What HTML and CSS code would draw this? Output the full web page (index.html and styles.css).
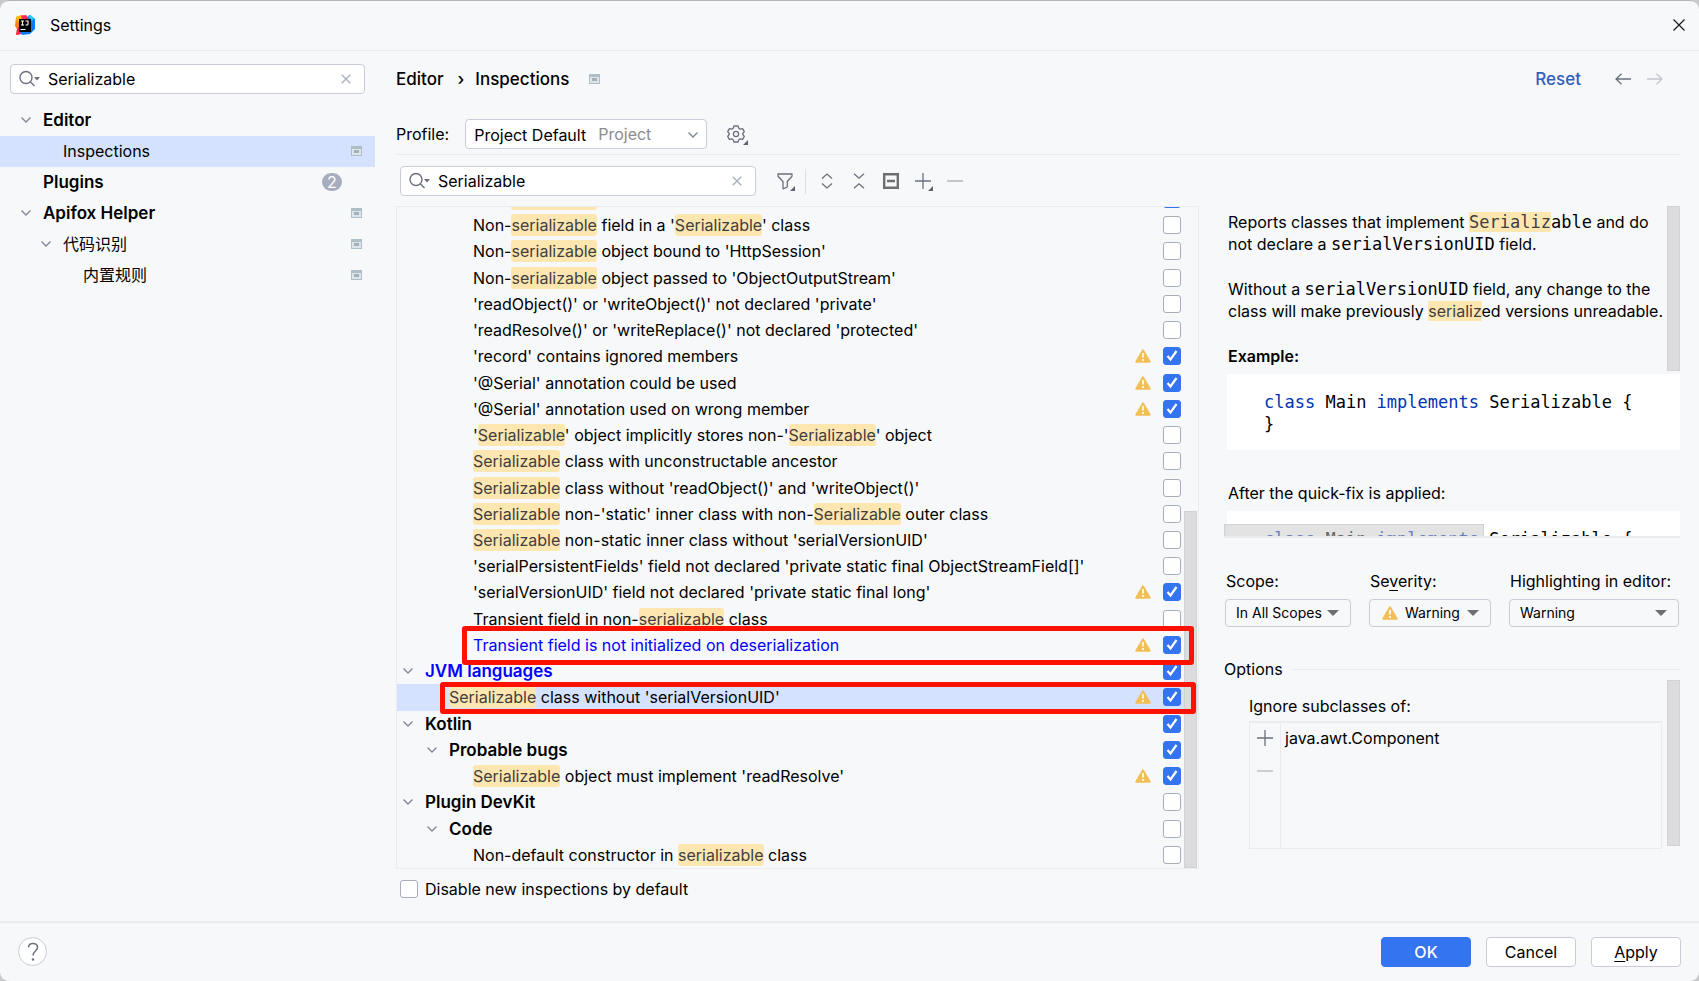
FILE: index.html
```html
<!DOCTYPE html>
<html lang="en">
<head>
<meta charset="utf-8">
<title>Settings</title>
<link rel="stylesheet" href="styles.css">
</head>
<body>
<svg class="sprite" aria-hidden="true">
  <symbol id="i-search" viewBox="0 0 22 18"><circle cx="7" cy="7.500" r="6" fill="none" stroke="#6c707e" stroke-width="1.4"/><path d="M11.500 12l4 4" stroke="#6c707e" stroke-width="1.4"/><path d="M15 7h6l-3 3.600z" fill="#6c707e"/></symbol>
  <symbol id="i-clear" viewBox="0 0 10 10"><path d="M.7.7l8.6 8.6M9.3.7L.7 9.3" stroke="#a8adbd" stroke-width="1.3"/></symbol>
  <symbol id="i-chevron" viewBox="0 0 12 8"><path d="M1.500 1.500L6 6l4.500-4.500" fill="none" stroke="#818594" stroke-width="1.3"/></symbol>
  <symbol id="i-project" viewBox="0 0 11 10"><path d="M0 0h11v10H0z" fill="#afbdc5"/><path d="M1 3h9v6H1z" fill="#dde5ea"/><path d="M3 4h5v3H3z" fill="#a3b1b9"/></symbol>
  <symbol id="i-warn" viewBox="0 0 16 14"><path d="M8 1.300L14.700 12.700H1.300z" fill="#f2bf57" stroke="#f2bf57" stroke-width="2" stroke-linejoin="round"/><path d="M8 4v4.500M8 10v2" stroke="#fff" stroke-width="1.700"/></symbol>
  <symbol id="i-plus" viewBox="0 0 16 16"><path d="M8 0v16M0 8h16" stroke="#6c707e" stroke-width="1.300"/></symbol>
  <symbol id="i-minus" viewBox="0 0 16 16"><path d="M0 8h16" stroke="#b4b6bd" stroke-width="1.300"/></symbol>
  <symbol id="i-corner" viewBox="0 0 5 5"><path d="M5 0v5H0z" fill="#5f6270"/></symbol>
</svg>
<div class="window">
  <header class="titlebar">
    <svg class="logo" width="20" height="20" viewBox="0 0 20 20" aria-hidden="true">
      <path d="M1 2L8 0l4 5-6 14-5 1 1-6-2-3z" fill="#fc801d"/>
      <path d="M5 1l6-1 4 4-9 15-5 1 1-6 2-3z" fill="#fe2857"/>
      <path d="M13 1l2-1 5 4v10l-5 5-8 1-2-3 8-4z" fill="#087cfa"/>
      <path d="M13 1l2-1 4 3-2 3z" fill="#21d0f5"/>
      <path d="M1 2l5-2 1 5-5 2z" fill="#fdb60d"/>
      <path d="M4 4h12v13H4z" fill="#000"/>
      <path d="M6 6h3M7.500 6v4M6 10h3M10.500 6h2.500v3q0 1-1 1h-1.500M5.500 14.500h5" fill="none" stroke="#fff" stroke-width="1.100"/>
    </svg>
    <h1 class="title">Settings</h1>
    <button class="plain close" aria-label="Close"><svg width="12" height="12" viewBox="0 0 12 12"><path d="M.5.5l11 11M11.500.5l-11 11" stroke="#1a1a1a" stroke-width="1.200"/></svg></button>
  </header>

  <div class="body">
    <nav class="sidebar">
      <div class="field side-search">
        <svg width="22" height="18"><use href="#i-search"/></svg>
        <input type="text" value="Serializable" aria-label="Search settings">
        <button class="plain" aria-label="Clear"><svg width="10" height="10"><use href="#i-clear"/></svg></button>
      </div>
      <ul class="nav">
        <li class="nav-row bold"><svg class="chev" width="12" height="8"><use href="#i-chevron"/></svg><a href="#">Editor</a></li>
        <li class="nav-row nav-2 selected"><a href="#">Inspections</a><svg width="11" height="10"><use href="#i-project"/></svg></li>
        <li class="nav-row nav-1 bold"><a href="#">Plugins</a><span class="count">2</span></li>
        <li class="nav-row bold"><svg class="chev" width="12" height="8"><use href="#i-chevron"/></svg><a href="#">Apifox Helper</a><svg width="11" height="10"><use href="#i-project"/></svg></li>
        <li class="nav-row nav-sub"><svg class="chev" width="12" height="8"><use href="#i-chevron"/></svg><a href="#">代码识别</a><svg width="11" height="10"><use href="#i-project"/></svg></li>
        <li class="nav-row nav-3"><a href="#">内置规则</a><svg width="11" height="10"><use href="#i-project"/></svg></li>
      </ul>
    </nav>

    <main class="main">
      <div class="crumbs">
        <span>Editor</span><span class="sep">›</span><span>Inspections</span>
        <svg class="crumb-icon" width="11" height="10"><use href="#i-project"/></svg>
        <a class="reset" href="#">Reset</a>
        <button class="plain" aria-label="Back"><svg width="16" height="12" viewBox="0 0 16 12"><path d="M6.500.7L1 6l5.500 5.300M1 6h15" fill="none" stroke="#6c707e" stroke-width="1.300"/></svg></button>
        <button class="plain" aria-label="Forward"><svg width="16" height="12" viewBox="0 0 16 12"><path d="M9.500.7L15 6l-5.500 5.300M15 6H0" fill="none" stroke="#c3c5cb" stroke-width="1.300"/></svg></button>
      </div>

      <div class="profile">
        <label for="profile">Profile:</label>
        <div class="combo">
          <select id="profile"><option>Project Default</option></select>
          <span class="hint">Project</span>
          <svg class="combo-arrow" width="12" height="8"><use href="#i-chevron"/></svg>
        </div>
        <button class="plain tool" aria-label="Profile actions">
          <svg width="18" height="18" viewBox="0 0 18 18"><path d="M7 1h4l.8 2.300 1.400.8 2.400-.5 1.700 3L15.800 8.500v1l1.500 1.900-1.700 3-2.400-.5-1.400.8L11 17H7l-.8-2.300-1.400-.8-2.400.5-1.700-3L2.200 9.500v-1L.7 6.600l1.700-3 2.400.5 1.400-.8z" fill="none" stroke="#6c707e" stroke-width="1.300" stroke-linejoin="round"/><circle cx="9" cy="9" r="2.600" fill="none" stroke="#6c707e" stroke-width="1.300"/></svg>
          <svg class="corner" width="5" height="5"><use href="#i-corner"/></svg>
        </button>
      </div>

      <div class="toolbar">
        <div class="field tree-search">
          <svg width="22" height="18"><use href="#i-search"/></svg>
          <input type="text" value="Serializable" aria-label="Search inspections">
          <button class="plain" aria-label="Clear"><svg width="10" height="10"><use href="#i-clear"/></svg></button>
        </div>
        <button class="plain tool" aria-label="Filter"><svg width="16" height="17" viewBox="0 0 16 17"><path d="M1 1h14v2.200L10.300 8.500V14L6 15.800V8.500L1 3.200z" fill="none" stroke="#6c707e" stroke-width="1.300" stroke-linejoin="round"/></svg><svg class="corner" width="5" height="5"><use href="#i-corner"/></svg></button>
        <span class="bar"></span>
        <button class="plain tool" aria-label="Expand all"><svg width="12" height="16" viewBox="0 0 12 16"><path d="M1 5.500L6 1l5 4.500M1 10.500L6 15l5-4.500" fill="none" stroke="#6c707e" stroke-width="1.300"/></svg></button>
        <button class="plain tool" aria-label="Collapse all"><svg width="12" height="16" viewBox="0 0 12 16"><path d="M1 .7l5 4.500L11 .7M1 15.300l5-4.500 5 4.500" fill="none" stroke="#6c707e" stroke-width="1.300"/></svg></button>
        <button class="plain tool" aria-label="Reset to empty"><svg width="16" height="16" viewBox="0 0 16 16"><path d="M1.200 1.200h13.600v13.600H1.200zM4 8h8" fill="none" stroke="#6e6e6e" stroke-width="2.400"/></svg></button>
        <button class="plain tool" aria-label="Add"><svg width="16" height="16"><use href="#i-plus"/></svg><svg class="corner" width="5" height="5"><use href="#i-corner"/></svg></button>
        <button class="plain tool" aria-label="Remove"><svg width="16" height="16"><use href="#i-minus"/></svg></button>
      </div>

      <div class="columns">
        <div class="left">
          <div class="tree">
            <ul class="rows">
              <li class="row cut l2"><label><span class="name">Non-<mark>serializable</mark></span><input type="checkbox" checked></label></li>
              <li class="row l2"><label><span class="name">Non-<mark>serializable</mark> field in a '<mark>Serializable</mark>' class</span><input type="checkbox"></label></li>
              <li class="row l2"><label><span class="name">Non-<mark>serializable</mark> object bound to 'HttpSession'</span><input type="checkbox"></label></li>
              <li class="row l2"><label><span class="name">Non-<mark>serializable</mark> object passed to 'ObjectOutputStream'</span><input type="checkbox"></label></li>
              <li class="row l2"><label><span class="name">'readObject()' or 'writeObject()' not declared 'private'</span><input type="checkbox"></label></li>
              <li class="row l2"><label><span class="name">'readResolve()' or 'writeReplace()' not declared 'protected'</span><input type="checkbox"></label></li>
              <li class="row l2"><label><span class="name">'record' contains ignored members</span><svg width="16" height="14"><use href="#i-warn"/></svg><input type="checkbox" checked></label></li>
              <li class="row l2"><label><span class="name">'@Serial' annotation could be used</span><svg width="16" height="14"><use href="#i-warn"/></svg><input type="checkbox" checked></label></li>
              <li class="row l2"><label><span class="name">'@Serial' annotation used on wrong member</span><svg width="16" height="14"><use href="#i-warn"/></svg><input type="checkbox" checked></label></li>
              <li class="row l2"><label><span class="name">'<mark>Serializable</mark>' object implicitly stores non-'<mark>Serializable</mark>' object</span><input type="checkbox"></label></li>
              <li class="row l2"><label><span class="name"><mark>Serializable</mark> class with unconstructable ancestor</span><input type="checkbox"></label></li>
              <li class="row l2"><label><span class="name"><mark>Serializable</mark> class without 'readObject()' and 'writeObject()'</span><input type="checkbox"></label></li>
              <li class="row l2"><label><span class="name"><mark>Serializable</mark> non-'static' inner class with non-<mark>Serializable</mark> outer class</span><input type="checkbox"></label></li>
              <li class="row l2"><label><span class="name"><mark>Serializable</mark> non-static inner class without 'serialVersionUID'</span><input type="checkbox"></label></li>
              <li class="row l2"><label><span class="name">'serialPersistentFields' field not declared 'private static final ObjectStreamField[]'</span><input type="checkbox"></label></li>
              <li class="row l2"><label><span class="name">'serialVersionUID' field not declared 'private static final long'</span><svg width="16" height="14"><use href="#i-warn"/></svg><input type="checkbox" checked></label></li>
              <li class="row l2"><label><span class="name">Transient field in non-<mark>serializable</mark> class</span><input type="checkbox"></label></li>
              <li class="row l2 changed"><label><span class="name">Transient field is not initialized on deserialization</span><svg width="16" height="14"><use href="#i-warn"/></svg><input type="checkbox" checked></label><span class="frame frame-a"></span></li>
              <li class="row bold changed"><label><svg class="chev" width="12" height="8"><use href="#i-chevron"/></svg><span class="name">JVM languages</span><input type="checkbox" checked></label></li>
              <li class="row l1 selected"><label><span class="name"><mark>Serializable</mark> class without 'serialVersionUID'</span><svg width="16" height="14"><use href="#i-warn"/></svg><input type="checkbox" checked></label><span class="frame frame-b"></span></li>
              <li class="row bold"><label><svg class="chev" width="12" height="8"><use href="#i-chevron"/></svg><span class="name">Kotlin</span><input type="checkbox" checked></label></li>
              <li class="row bold sub"><label><svg class="chev" width="12" height="8"><use href="#i-chevron"/></svg><span class="name">Probable bugs</span><input type="checkbox" checked></label></li>
              <li class="row l2"><label><span class="name"><mark>Serializable</mark> object must implement 'readResolve'</span><svg width="16" height="14"><use href="#i-warn"/></svg><input type="checkbox" checked></label></li>
              <li class="row bold"><label><svg class="chev" width="12" height="8"><use href="#i-chevron"/></svg><span class="name">Plugin DevKit</span><input type="checkbox"></label></li>
              <li class="row bold sub"><label><svg class="chev" width="12" height="8"><use href="#i-chevron"/></svg><span class="name">Code</span><input type="checkbox"></label></li>
              <li class="row l2"><label><span class="name">Non-default constructor in <mark>serializable</mark> class</span><input type="checkbox"></label></li>
            </ul>
            <span class="thumb tree-thumb"></span>
          </div>
          <label class="disable"><input type="checkbox"><span>Disable new inspections by default</span></label>
        </div>

        <aside class="right">
          <div class="doc">
            <p>Reports classes that implement <code><mark>Serializ</mark>able</code> and do<br>not declare a <code>serialVersionUID</code> field.</p>
            <p>Without a <code>serialVersionUID</code> field, any change to the<br>class will make previously <mark>serializ</mark>ed versions unreadable.</p>
            <p class="example">Example:</p>
            <pre><b>class</b> Main <b>implements</b> Serializable {
}</pre>
            <p class="after">After the quick-fix is applied:</p>
            <pre><b>class</b> Main <b>implements</b> Serializable {</pre>
            <span class="thumb doc-thumb"></span>
            <span class="thumb doc-hthumb"></span>
          </div>
          <div class="settings">
            <div class="setting scope"><label for="scope">Scope:</label>
              <div class="drop"><select id="scope"><option>In All Scopes</option></select></div></div>
            <div class="setting severity"><label for="severity">Se<u>v</u>erity:</label>
              <div class="drop"><svg class="drop-icon" width="16" height="14"><use href="#i-warn"/></svg><select id="severity"><option>Warning</option></select></div></div>
            <div class="setting highlight"><label for="highlight">Highlighting in editor:</label>
              <div class="drop"><select id="highlight"><option>Warning</option></select></div></div>
          </div>
          <h2 class="options-title">Options</h2>
          <div class="options">
            <p>Ignore subclasses of:</p>
            <div class="classes">
              <div class="class-tools">
                <button class="plain" aria-label="Add class"><svg width="16" height="16"><use href="#i-plus"/></svg></button>
                <button class="plain" aria-label="Remove class"><svg width="16" height="16"><use href="#i-minus"/></svg></button>
              </div>
              <ul class="class-list"><li>java.awt.Component</li></ul>
            </div>
            <span class="thumb options-thumb"></span>
          </div>
        </aside>
      </div>
    </main>
  </div>

  <footer class="footer">
    <button class="help" aria-label="Help"><svg width="12" height="20" viewBox="0 0 12 20"><path d="M1.500 5.500C1.500 3 3.500 1.500 6 1.500s4.500 1.500 4.500 4C10.500 9 6 9 6 13.500" fill="none" stroke="#6c707e" stroke-width="1.500"/><circle cx="6" cy="17.500" r="1.200" fill="#6c707e"/></svg></button>
    <button class="btn primary">OK</button>
    <button class="btn">Cancel</button>
    <button class="btn"><u>A</u>pply</button>
  </footer>
</div>
</body>
</html>
```
FILE: styles.css
```css
* { box-sizing: border-box; }

body {
  margin: 0;
  background: #c9cacc;
  color: #000;
  font: 16px/22px Inter, "Noto Sans CJK SC", sans-serif;
}

ul, p, h1, h2, pre { margin: 0; padding: 0; list-style: none; font-size: inherit; font-weight: inherit; }
a { color: inherit; text-decoration: none; }
input, select, button { font: inherit; color: inherit; }
svg { display: block; flex: none; }

.sprite { position: absolute; width: 0; height: 0; }
.bold { font-size: 17px; font-weight: 600; }

.plain { display: flex; align-items: center; justify-content: center; border: 0; padding: 0; background: none; }

.window {
  display: flex;
  flex-direction: column;
  height: 100vh;
  min-height: 900px;
  background: #f7f8fa;
  border-top: 1px solid #b4b5b8;
  border-radius: 9px;
  overflow: hidden;
}

.titlebar {
  display: flex;
  align-items: center;
  gap: 15px;
  height: 50px;
  padding: 0 14px 2px 15px;
  border-bottom: 1px solid #ebecf0;
}
.title { flex: 1; }

.body { display: flex; flex: 1; min-height: 0; }

/* Search fields */
.field {
  display: flex;
  align-items: center;
  gap: 7px;
  height: 30px;
  padding: 0 13px 1px 8px;
  background: #fff;
  border: 1px solid #c9ccd6;
  border-radius: 4px;
}
.field input { flex: 1; min-width: 0; border: 0; padding: 0; background: none; outline: 0; }

/* Sidebar */
.sidebar { width: 375px; flex: none; padding-top: 13px; }
.side-search { margin: 0 10px; }
.nav { padding-top: 11px; }
.nav-row {
  display: flex;
  align-items: center;
  height: 31px;
  padding: 0 13px 1px 20px;
}
.nav-row a { flex: 1; }
.nav-row .chev { margin-right: 11px; }
.nav-1 { padding-left: 43px; }
.nav-2 { padding-left: 63px; }
.nav-sub { padding-left: 40px; }
.nav-3 { padding-left: 83px; }
.selected { background: #d4e2ff; }
.count {
  width: 20px;
  margin-right: 20px;
  border-radius: 9px;
  background: #a8adbd;
  color: #fff;
  font-size: 16px;
  font-weight: 400;
  line-height: 18px;
  text-align: center;
}

/* Main area */
.main { display: flex; flex: 1; flex-direction: column; min-width: 0; padding: 0 19px 0 21px; }

.crumbs { display: flex; align-items: center; height: 56px; font-size: 17px; font-weight: 500; padding-right: 17px; }
.sep { margin: 0 11px 0 14px; }
.crumb-icon { margin-left: 20px; }
.reset { margin: 0 34px 0 auto; color: #315fbd; }
.crumbs .plain + .plain { margin-left: 16px; }

.profile { display: flex; align-items: flex-start; padding: 12px 0 5px; line-height: 30px; border-bottom: 1px solid #ebecf0; }
.profile .tool { width: 18px; height: 30px; margin-left: 20px; }
.combo { position: relative; width: 242px; height: 30px; margin-left: 16px; }
.combo select {
  appearance: none;
  width: 100%;
  height: 30px;
  padding: 0 8px 1px;
  border: 1px solid #c9ccd6;
  border-radius: 4px;
  background: #fff;
}
.hint { position: absolute; left: 133px; top: 0; color: #8c8c8c; pointer-events: none; }
.combo-arrow { position: absolute; right: 8px; top: 12px; pointer-events: none; }

.tool { position: relative; flex: none; width: 17px; height: 20px; }
.corner { position: absolute; right: -2px; bottom: 0; }
.profile .corner { bottom: 4px; right: -3px; }

.toolbar { display: flex; align-items: center; gap: 15px; padding: 11px 0 10px 4px; }
.tree-search { width: 356px; margin-right: 5px; }
.bar { width: 1px; height: 25px; margin: 0 -3px; background: #dfe1e5; }

.columns { display: flex; flex: 1; min-height: 0; gap: 25px; }

/* Inspection tree */
.left { display: flex; flex: 1; flex-direction: column; min-width: 0; }
.tree { position: relative; flex: 1; min-height: 0; border: 1px solid #ebecf0; }
.rows { display: grid; grid-template-rows: 5px repeat(25, 1fr); height: 100%; }
.row { position: relative; min-height: 0; padding-left: 76px; }
.row label { display: flex; align-items: center; height: 100%; padding-right: 17px; }
.row .name { flex: 1; white-space: nowrap; }
.row svg { margin-right: 12px; }
.row .chev { margin: 0 11px 0 5px; }
.l1 { padding-left: 52px; }
.row.bold { padding-left: 0; }
.row.sub { padding-left: 24px; }
.row.cut { display: flex; align-items: flex-end; overflow: hidden; }
.row.cut label { flex: 1; height: 26px; }
.changed { color: #0000ff; }

mark { color: #3f3f3f; background: #fee6b1; border-radius: 3px; padding: 1px 0; }

input[type="checkbox"] {
  appearance: none;
  flex: none;
  width: 18px;
  height: 18px;
  margin: 0;
  border: 1px solid #a8adbd;
  border-radius: 3px;
  background: #fff;
}
input[type="checkbox"]:checked {
  border-color: #3574f0;
  background: #3574f0 url("data:image/svg+xml,%3Csvg xmlns='http://www.w3.org/2000/svg' viewBox='0 0 16 16'%3E%3Cpath d='M3.500 8L6.500 11.500 12.500 3' fill='none' stroke='%23fff' stroke-width='2.200'/%3E%3C/svg%3E") center / 16px 16px no-repeat;
}

/* Hand-marked rows */
.frame { position: absolute; z-index: 2; border: 5px solid #ff1100; border-radius: 3px; pointer-events: none; }
.frame-a { inset: -6px 4px -7px 65px; }
.frame-b { inset: -2px 2px -3px 43px; }

.thumb { position: absolute; background: #dcdcde; border: 1px solid #d2d2d4; }
.tree-thumb { right: 1px; bottom: 0; width: 13px; height: 54%; }

.disable { display: flex; align-items: center; gap: 7px; height: 52px; padding: 0 4px 12px; }

/* Description panel */
.right { display: flex; flex-direction: column; width: 456px; flex: none; }
.doc { position: relative; flex: 1; min-height: 0; overflow: hidden; padding: 5px 0 0 3px; border-bottom: 2px solid #ebecf0; white-space: nowrap; }
.doc p { padding-left: 1px; margin-bottom: 23px; }
.doc mark { border-radius: 0; padding: 0; }
.doc .example { margin-bottom: 7px; font-weight: 600; }
.doc .after { margin: 32px 0 7px; }
code, pre { font: 17px/22px "DejaVu Sans Mono", monospace; }
code { line-height: 20px; }
pre { height: 76px; padding: 17px 0 0 37px; background: #fff; }
pre b { color: #0033b3; font-weight: 400; }
.doc-thumb { right: 0; top: 0; width: 13px; height: 50%; }
.doc-hthumb { left: 0; bottom: 0; width: 260px; height: 12px; border-bottom: 0; background: rgba(200, 200, 200, .5); }

.settings { display: flex; gap: 18px; padding: 32px 1px 0; }
.setting > label { display: block; padding-left: 1px; margin-bottom: 7px; white-space: nowrap; }
.scope { width: 126px; }
.severity { width: 122px; }
.highlight { flex: 1; }
.drop { position: relative; }
.drop select {
  appearance: none;
  width: 100%;
  height: 28px;
  padding: 0 10px;
  border: 1px solid #c9ccd6;
  border-radius: 4px;
  background: #f7f8fa;
  font-size: 14px;
}
.severity select { padding-left: 35px; }
.drop-icon { position: absolute; left: 13px; top: 7px; }
.drop::after {
  content: "";
  position: absolute;
  right: 12px;
  top: 11px;
  border: 6px solid transparent;
  border-top-color: #6e6e6e;
  border-bottom-width: 0;
  pointer-events: none;
}

.options-title { display: flex; align-items: center; gap: 8px; margin-top: 31px; }
.options-title::after { content: ""; flex: 1; height: 1px; background: #ebecf0; }
.options { position: relative; height: 241px; padding: 15px 18px 0 25px; }
.classes { display: flex; height: 128px; margin-top: 4px; border: 1px solid #ebecf0; border-top-width: 2px; }
.class-tools { display: flex; flex-direction: column; align-items: center; gap: 17px; width: 31px; padding-top: 7px; border-right: 1px solid #ebecf0; }
.class-list { padding: 4px; }
.options-thumb { right: 0; top: 0; width: 13px; height: 166px; }

/* Footer */
.footer { display: flex; align-items: center; gap: 15px; height: 60px; padding: 0 18px 1px; border-top: 2px solid #ebecf0; }
.help {
  display: flex;
  align-items: center;
  justify-content: center;
  width: 29px;
  height: 29px;
  margin-right: auto;
  padding: 0;
  border: 1px solid #c9ccd6;
  border-radius: 50%;
  background: #fff;
}
.btn { width: 90px; height: 30px; padding: 0; border: 1px solid #c9ccd6; border-radius: 4px; background: #fff; }
.primary { border-color: #3574f0; background: #3574f0; color: #fff; font-weight: 500; }
.btn u, .setting u { text-underline-offset: 3px; }
```
